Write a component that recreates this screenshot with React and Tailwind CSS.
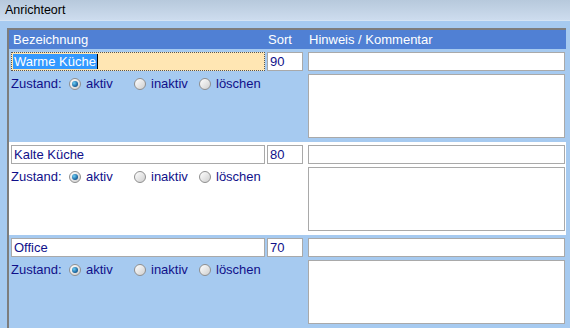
import React from 'react';

const ROWS = [
  { name: 'Warme Küche', sort: '90', bg: 'bg-[#a6caf0]', focused: true },
  { name: 'Kalte Küche', sort: '80', bg: 'bg-white' },
  { name: 'Office', sort: '70', bg: 'bg-[#a6caf0]' },
];

const fieldCls =
  'block h-[19px] border border-[#a9a9a9] bg-white px-[2px] text-[13px] leading-[17px] text-[#10108a] outline-none';

function Radio({ checked, label }) {
  return (
    <label className="flex w-[65px] items-center gap-[5px]">
      <span className="relative flex h-[12px] w-[12px] items-center justify-center rounded-full border border-[#8f8f8f] bg-gradient-to-br from-[#ffffff] to-[#cfcfcf]">
        {checked && (
          <span className="h-[6px] w-[6px] rounded-full bg-[radial-gradient(circle_at_35%_35%,#6fd0f5,#1d6aa5_60%,#0d3d66)]" />
        )}
      </span>
      <span>{label}</span>
    </label>
  );
}

function Row({ row, first }) {
  return (
    <div className={`flex pl-[2px] pt-[3px] ${first ? 'h-[93px]' : 'h-[93px]'} ${row.bg}`}>
      <div className="flex w-[254px] flex-col">
        {row.focused ? (
          <div className="flex h-[19px] items-stretch border border-dotted border-[#555] bg-[#ffe6b3] p-[1px] text-[13px] leading-[15px]">
            <span className="bg-[#3399ff] pl-[1px] pr-[1px] text-white">{row.name}</span>
            <span className="w-px bg-[#000]" />
          </div>
        ) : (
          <input readOnly value={row.name} className={`${fieldCls} w-full`} />
        )}
        <div className="mt-[5px] flex h-[15px] items-center text-[13px] text-[#10108a]">
          <span className="w-[58px]">Zustand:</span>
          <Radio checked label="aktiv" />
          <Radio label="inaktiv" />
          <Radio label="löschen" />
        </div>
      </div>
      <input readOnly value={row.sort} className={`${fieldCls} ml-[2px] w-[36px]`} />
      <div className="ml-[5px] flex w-[257px] flex-col">
        <input readOnly value="" className={`${fieldCls} w-full`} />
        <textarea
          readOnly
          value=""
          className="mt-[3px] block h-[64px] w-full resize-none border border-[#a9a9a9] bg-white outline-none"
        />
      </div>
    </div>
  );
}

export default function App() {
  return (
    <div className="h-[328px] w-[570px] overflow-hidden bg-[#a6caf0] font-['Liberation_Sans',Arial,sans-serif]">
      <div className="flex h-[20px] items-center bg-gradient-to-b from-[#b7c9dc] to-[#cddcee] pl-[5px] text-[12.5px] text-black">
        Anrichteort
      </div>
      <div className="h-px bg-[#d6e4f3]" />
      <div className="mt-[7px] ml-[7px] w-[559px] border-t-2 border-l-2 border-[#7d7d7d]">
        <div className="flex h-[19px] items-center bg-[#5080d4] text-[13px] text-white">
          <span className="w-[259px] pl-[4px]">Bezeichnung</span>
          <span className="w-[41px]">Sort</span>
          <span>Hinweis / Kommentar</span>
        </div>
        {ROWS.map((row, i) => (
          <Row key={row.name} row={row} first={i === 0} />
        ))}
      </div>
    </div>
  );
}
